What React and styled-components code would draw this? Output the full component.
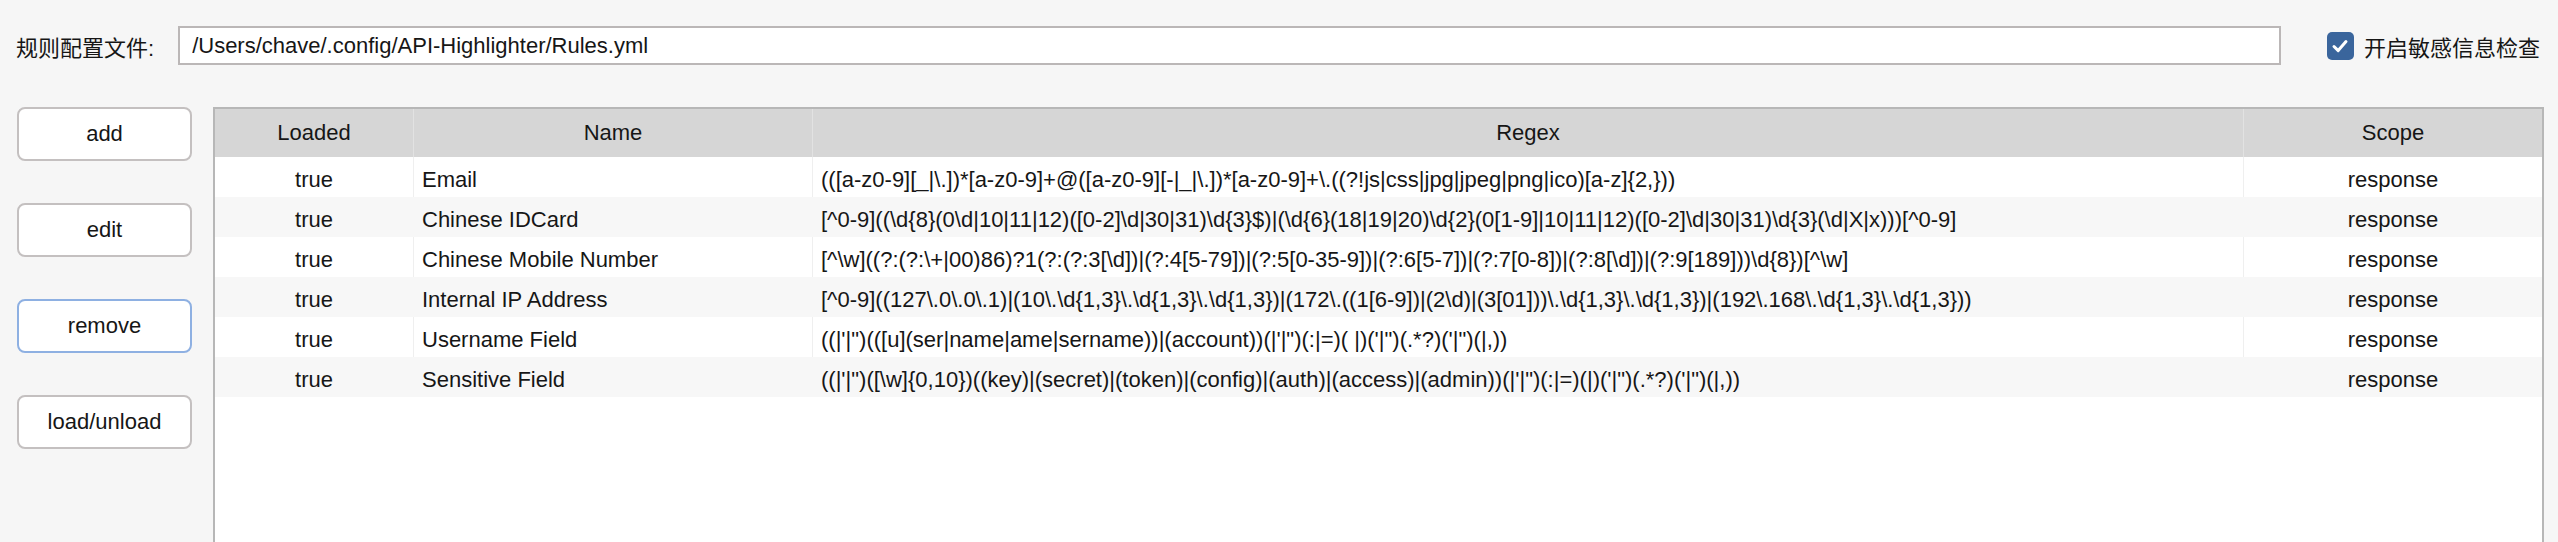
import React, { useState } from 'react';
import styled, { createGlobalStyle } from 'styled-components';

const rules = [
  { loaded: 'true', name: 'Email', regex: '(([a-z0-9][_|\\.])*[a-z0-9]+@([a-z0-9][-|_|\\.])*[a-z0-9]+\\.((?!js|css|jpg|jpeg|png|ico)[a-z]{2,}))', scope: 'response' },
  { loaded: 'true', name: 'Chinese IDCard', regex: '[^0-9]((\\d{8}(0\\d|10|11|12)([0-2]\\d|30|31)\\d{3}$)|(\\d{6}(18|19|20)\\d{2}(0[1-9]|10|11|12)([0-2]\\d|30|31)\\d{3}(\\d|X|x)))[^0-9]', scope: 'response' },
  { loaded: 'true', name: 'Chinese Mobile Number', regex: '[^\\w]((?:(?:\\+|00)86)?1(?:(?:3[\\d])|(?:4[5-79])|(?:5[0-35-9])|(?:6[5-7])|(?:7[0-8])|(?:8[\\d])|(?:9[189]))\\d{8})[^\\w]', scope: 'response' },
  { loaded: 'true', name: 'Internal IP Address', regex: '[^0-9]((127\\.0\\.0\\.1)|(10\\.\\d{1,3}\\.\\d{1,3}\\.\\d{1,3})|(172\\.((1[6-9])|(2\\d)|(3[01]))\\.\\d{1,3}\\.\\d{1,3})|(192\\.168\\.\\d{1,3}\\.\\d{1,3}))', scope: 'response' },
  { loaded: 'true', name: 'Username Field', regex: '((|\'|")(([u](ser|name|ame|sername))|(account))(|\'|")(:|=)( |)(\'|")(.*?)(\'|")(|,))', scope: 'response' },
  { loaded: 'true', name: 'Sensitive Field', regex: '((|\'|")([\\w]{0,10})((key)|(secret)|(token)|(config)|(auth)|(access)|(admin))(|\'|")(:|=)(|)(\'|")(.*?)(\'|")(|,))', scope: 'response' },
];

const columns = [
  { key: 'loaded', title: 'Loaded', width: '199px', align: 'center' },
  { key: 'name', title: 'Name', width: '399px', align: 'left' },
  { key: 'regex', title: 'Regex', width: '1431px', align: 'left' },
  { key: 'scope', title: 'Scope', width: '1fr', align: 'center' },
];

const GlobalStyle = createGlobalStyle`
  html, body {
    margin: 0;
    padding: 0;
    background: #f6f6f6;
    overflow: hidden;
  }
  body {
    font-family: "Liberation Sans", Arial, "Noto Sans CJK SC", sans-serif;
    color: #161616;
  }
`;

export default function App() {
  const [checked, setChecked] = useState(true);

  return (
    <>
      <GlobalStyle />
      <Page>
        <TopBar>
          <FieldLabel>规则配置文件:</FieldLabel>
          <PathInput readOnly value="/Users/chave/.config/API-Highlighter/Rules.yml" />
          <CheckLabel onClick={() => setChecked(!checked)}>
            <CheckBox $on={checked}>
              {checked && (
                <svg width="20" height="20" viewBox="0 0 20 20">
                  <path d="M4 10.5 L8.2 14.6 L16 5.6" fill="none" stroke="#fff" strokeWidth="3" strokeLinecap="round" strokeLinejoin="round" />
                </svg>
              )}
            </CheckBox>
            开启敏感信息检查
          </CheckLabel>
        </TopBar>

        <MainContent>
          <Sidebar>
            <ActionButton>add</ActionButton>
            <ActionButton>edit</ActionButton>
            <ActionButton $focused>remove</ActionButton>
            <ActionButton>load/unload</ActionButton>
          </Sidebar>

          <TableBox>
            <HeaderRow>
              {columns.map((c) => (
                <HeaderCell key={c.key}>{c.title}</HeaderCell>
              ))}
            </HeaderRow>
            {rules.map((r, i) => (
              <Row key={r.name} $striped={i % 2 === 1}>
                {columns.map((c) => (
                  <Cell key={c.key} $align={c.align} $striped={i % 2 === 1}>
                    {r[c.key]}
                  </Cell>
                ))}
              </Row>
            ))}
          </TableBox>
        </MainContent>
      </Page>
    </>
  );
}

const gridCols = columns.map((c) => c.width).join(' ');

const Page = styled.div`
  display: flex;
  flex-direction: column;
  padding: 26px 14px 0 16px;
  height: 100vh;
  box-sizing: border-box;
`;

const TopBar = styled.div`
  display: flex;
  align-items: center;
  height: 39px;
`;

const FieldLabel = styled.div`
  font-size: 22px;
  margin-right: 24px;
  white-space: nowrap;
`;

const PathInput = styled.input`
  flex: 1;
  height: 39px;
  box-sizing: border-box;
  border: 2px solid #bbb7b7;
  background: #fff;
  padding: 0 12px;
  font-family: "Liberation Sans", Arial, sans-serif;
  font-size: 22px;
  color: #161616;
  outline: none;
`;

const CheckLabel = styled.label`
  display: flex;
  align-items: center;
  gap: 10px;
  margin-left: 46px;
  margin-right: 4px;
  font-size: 22px;
  white-space: nowrap;
  cursor: pointer;
`;

const CheckBox = styled.span`
  width: 27px;
  height: 28px;
  border-radius: 5px;
  background: ${(p) => (p.$on ? '#3a659c' : '#fff')};
  display: flex;
  align-items: center;
  justify-content: center;
`;

const MainContent = styled.div`
  display: flex;
  flex: 1;
  margin-top: 42px;
  gap: 21px;
  min-height: 0;
`;

const Sidebar = styled.div`
  width: 175px;
  display: flex;
  flex-direction: column;
  gap: 42px;
  padding-left: 1px;
`;

const ActionButton = styled.button`
  height: 54px;
  box-sizing: border-box;
  border: 2px solid ${(p) => (p.$focused ? '#8eb0e2' : '#c4c0c0')};
  border-radius: 8px;
  background: #fff;
  font-family: "Liberation Sans", Arial, sans-serif;
  font-size: 22px;
  color: #161616;
  cursor: pointer;
`;

const TableBox = styled.div`
  flex: 1;
  height: 480px;
  border: 2px solid #b7b7b7;
  border-bottom: none;
  background: #fff;
  overflow: hidden;
`;

const HeaderRow = styled.div`
  display: grid;
  grid-template-columns: ${gridCols};
  height: 48px;
  background: #d6d6d6;
`;

const HeaderCell = styled.div`
  display: flex;
  align-items: center;
  justify-content: center;
  font-size: 22px;
  border-right: 1px solid #e2e2e2;
  &:last-child {
    border-right: none;
  }
`;

const Row = styled.div`
  display: grid;
  grid-template-columns: ${gridCols};
  height: 40px;
  background: ${(p) => (p.$striped ? '#f7f7f7' : '#fff')};
`;

const Cell = styled.div`
  display: flex;
  align-items: center;
  justify-content: ${(p) => (p.$align === 'center' ? 'center' : 'flex-start')};
  padding: 6px 8px 0;
  font-size: 22px;
  white-space: nowrap;
  overflow: hidden;
  border-right: 1px solid ${(p) => (p.$striped ? 'transparent' : '#efefef')};
  &:last-child {
    border-right: none;
  }
`;
